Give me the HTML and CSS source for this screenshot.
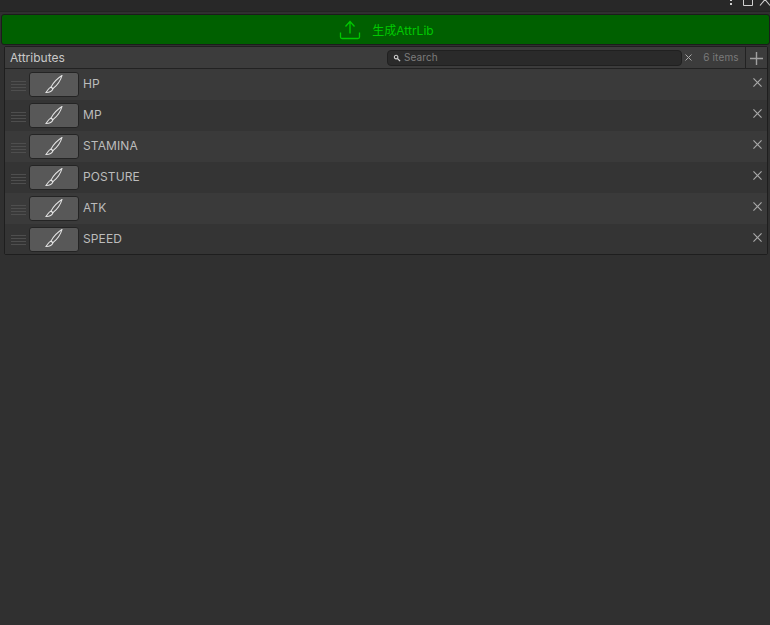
FILE: index.html
```html
<!DOCTYPE html>
<html lang="en">
<head>
<meta charset="utf-8">
<title>Attributes</title>
<link rel="stylesheet" href="styles.css">
</head>
<body>
<div class="tabbar">
  <svg class="win-icon dots" width="6" height="12" viewBox="0 0 6 12"><g fill="#d0d0d0"><rect x="2" y="0" width="2" height="1"/><rect x="2" y="3" width="2" height="2"/></g></svg>
  <svg class="win-icon square" width="12" height="12" viewBox="0 0 12 12"><path d="M1.500 -2V5.500H10.500V-2" fill="none" stroke="#d0d0d0"/></svg>
  <svg class="win-icon close" width="12" height="12" viewBox="0 0 12 12"><path d="M2 5.500L7 -.5L12 5.500" fill="none" stroke="#d0d0d0" stroke-width="1.100"/></svg>
</div>
<button class="generate">
  <svg width="22" height="20" viewBox="0 0 22 20"><path d="M11 13.500V2M6.500 6.500L11 1.500L15.500 6.500M1.500 12.500V17A1.500 1.500 0 0 0 3 18.500H19A1.500 1.500 0 0 0 20.500 17V12.500" fill="none" stroke="#00c800" stroke-width="1.300"/></svg>
  <span class="generate-label">生成AttrLib</span>
</button>
<section class="panel">
  <header class="panel-head">
    <span class="panel-title">Attributes</span>
    <div class="search">
      <svg width="8" height="8" viewBox="0 0 9 9"><circle cx="3.500" cy="3.500" r="2" fill="none" stroke="#d0d0d0" stroke-width="1.200"/><path d="M5 5L8 8" stroke="#d0d0d0" stroke-width="1.400"/></svg>
      <span class="search-text">Search</span>
    </div>
    <svg class="clear" width="7" height="7" viewBox="0 0 7 7"><path d="M.5 .5L6.500 6.500M6.500 .5L.5 6.500" stroke="#a8a8a8"/></svg>
    <span class="count">6 items</span>
    <div class="add"><svg width="13" height="13" viewBox="0 0 13 13"><path d="M6.500 0V13M0 6.500H13" stroke="#a0a0a0" stroke-width="1.400"/></svg></div>
  </header>
  <div class="row">
    <div class="grip"></div>
    <div class="brush"><svg width="19" height="19" viewBox="0 0 18 18"><use href="#brush"/></svg></div>
    <span class="name">HP</span>
    <svg class="remove" width="9" height="9" viewBox="0 0 10 10"><use href="#x"/></svg>
  </div>
  <div class="row">
    <div class="grip"></div>
    <div class="brush"><svg width="19" height="19" viewBox="0 0 18 18"><use href="#brush"/></svg></div>
    <span class="name">MP</span>
    <svg class="remove" width="9" height="9" viewBox="0 0 10 10"><use href="#x"/></svg>
  </div>
  <div class="row">
    <div class="grip"></div>
    <div class="brush"><svg width="19" height="19" viewBox="0 0 18 18"><use href="#brush"/></svg></div>
    <span class="name">STAMINA</span>
    <svg class="remove" width="9" height="9" viewBox="0 0 10 10"><use href="#x"/></svg>
  </div>
  <div class="row">
    <div class="grip"></div>
    <div class="brush"><svg width="19" height="19" viewBox="0 0 18 18"><use href="#brush"/></svg></div>
    <span class="name">POSTURE</span>
    <svg class="remove" width="9" height="9" viewBox="0 0 10 10"><use href="#x"/></svg>
  </div>
  <div class="row">
    <div class="grip"></div>
    <div class="brush"><svg width="19" height="19" viewBox="0 0 18 18"><use href="#brush"/></svg></div>
    <span class="name">ATK</span>
    <svg class="remove" width="9" height="9" viewBox="0 0 10 10"><use href="#x"/></svg>
  </div>
  <div class="row">
    <div class="grip"></div>
    <div class="brush"><svg width="19" height="19" viewBox="0 0 18 18"><use href="#brush"/></svg></div>
    <span class="name">SPEED</span>
    <svg class="remove" width="9" height="9" viewBox="0 0 10 10"><use href="#x"/></svg>
  </div>
</section>
<svg class="defs" width="0" height="0">
  <defs>
    <g id="brush" fill="none" stroke="#e4e4e4" stroke-width=".95">
      <path d="M17 .5C13 3 9 7 6.500 11.500L8.500 13C12 10 15.500 6 17 .5Z"/>
      <path d="M6.500 11.500C4.500 12 4 14 2 16.500C4.500 16.500 7.500 16 8.500 13Z"/>
    </g>
    <path id="x" d="M.5 .5L9.500 9.500M9.500 .5L.5 9.500" stroke="#a8a8a8" stroke-width="1.300"/>
  </defs>
</svg>
</body>
</html>
```
FILE: styles.css
```css
* { box-sizing: border-box; }
html, body { height: 100%; }
body {
  margin: 0;
  background: #303030;
  font-family: Inter, "Noto Sans CJK SC", sans-serif;
  font-size: 12px;
  color: #c4c4c4;
  overflow: hidden;
}
.tabbar {
  height: 12px;
  background: #282828;
  border-bottom: 1px solid #232323;
  display: flex;
  justify-content: flex-end;
  align-items: flex-start;
  margin-bottom: 2px;
}
.win-icon { display: block; flex: none; }
.square { margin-left: 8px; }
.close { margin-left: 4px; }
.generate {
  display: flex;
  align-items: center;
  justify-content: center;
  gap: 11px;
  width: 769px;
  height: 31px;
  margin: 0 0 1px 1px;
  padding: 0 0 0 2px;
  background: #006000;
  border: 1px solid #1c1c1c;
  border-radius: 3px;
  font: inherit;
  color: #00c800;
}
.generate-label { font-size: 12px; }
.panel {
  margin-left: 4px;
  width: 764px;
  border: 1px solid #1e1e1e;
  border-radius: 2px;
  background: #353535;
}
.panel-head {
  display: flex;
  align-items: center;
  height: 22px;
  background: #3c3c3c;
  border-bottom: 1px solid #222222;
  padding-left: 5px;
}
.panel-title { flex: 1; color: #c8c8c8; }
.search {
  width: 295px;
  height: 16px;
  display: flex;
  align-items: center;
  gap: 3px;
  padding-left: 5px;
  background: #2a2a2a;
  border: 1px solid #202020;
  border-radius: 4px;
  font-size: 10px;
  color: #7c7c7c;
}
.search-text { padding-bottom: 1px; letter-spacing: .1px; }
.clear { margin: 0 0 0 3px; flex: none; }
.count {
  width: 50px;
  text-align: center;
  margin-left: 3px;
  padding: 0 0 1px 2px;
  font-size: 10px;
  letter-spacing: .15px;
  color: #7a7a7a;
  white-space: nowrap;
}
.add {
  width: 22px;
  height: 21px;
  display: flex;
  align-items: center;
  justify-content: center;
  padding-top: 2px;
  border-left: 1px solid #222222;
}
.row {
  display: flex;
  align-items: center;
  height: 31px;
  padding-left: 6px;
  background: #3a3a3a;
  position: relative;
}
.row:nth-of-type(even) { background: #343434; }
.row:last-child { height: 30px; }
.grip {
  width: 15px;
  height: 10px;
  margin-top: 2px;
  background: repeating-linear-gradient(to bottom, #4e4e4e 0 1px, transparent 1px 3px);
}
.brush {
  width: 50px;
  height: 25px;
  margin-left: 3px;
  display: flex;
  align-items: center;
  justify-content: center;
  padding: 0 1px 1px 0;
  background: #585858;
  border: 1px solid #242424;
  border-radius: 3px;
}
.name { margin-left: 4px; flex: 1; padding-bottom: 2px; letter-spacing: .1px; color: #bcbcbc; }
.remove { position: absolute; right: 5px; top: 9px; }
.defs { position: absolute; }
```
